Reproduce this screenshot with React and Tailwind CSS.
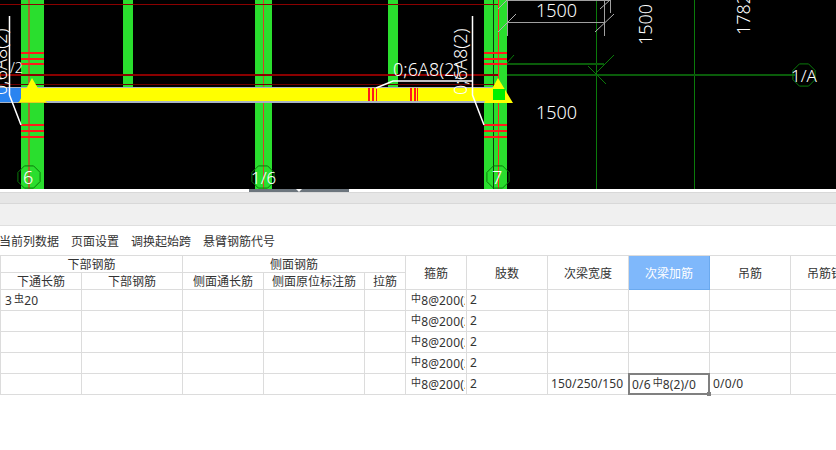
const FONT = '"Noto Sans", "Noto Sans CJK SC", sans-serif';
const CJK = '"Noto Sans CJK SC", sans-serif';

function Octagon({ cx, cy, r }) {
  const pts = [];
  for (let i = 0; i < 8; i++) {
    const a = ((i + 0.5) * Math.PI) / 4;
    pts.push(`${cx + r * Math.cos(a)},${cy + r * Math.sin(a)}`);
  }
  return <polygon points={pts.join(" ")} fill="none" stroke="#0a7a0a" strokeWidth="1" />;
}

function Stirrups({ x, w }) {
  return (
    <g fill="#ff1a1a">
      {[52, 58, 63, 124, 130, 136].map((y) => (
        <rect key={y} x={x} y={y} width={w} height="2" />
      ))}
    </g>
  );
}

function CadCanvas() {
  const label = { fontFamily: FONT, fill: "#fff", fontSize: 18, fontWeight: 300 };
  return (
    <svg width="836" height="189" viewBox="0 0 836 189" className="block">
      <rect width="836" height="189" fill="#000" />
      {/* axis lines */}
      <rect x="596" y="0" width="1" height="189" fill="#0a7a0a" />
      <rect x="694" y="0" width="1" height="189" fill="#0a7a0a" />
      <rect x="498" y="74" width="297" height="2" fill="#0a5c0a" />
      <rect x="498" y="63" width="106" height="2" fill="#0a5c0a" />
      <path d="M498 73L514 55M588 66L606 84M596 73L614 55" stroke="#0a7a0a" fill="none" />

      {/* columns */}
      <g fill="#2ade2e">
        <rect x="21" y="0" width="23" height="189" />
        <rect x="123" y="0" width="10" height="88" />
        <rect x="255" y="0" width="17" height="189" />
        <rect x="388" y="0" width="10" height="88" />
        <rect x="484" y="0" width="23" height="189" />
      </g>
      <rect x="28" y="0" width="2" height="189" fill="#a8662c" />
      <rect x="263" y="0" width="1" height="189" fill="#d8402a" />
      <rect x="493" y="0" width="1" height="189" fill="#0b3b10" />
      <rect x="498" y="0" width="1" height="189" fill="#ff2a1a" />
      <Stirrups x={21} w={23} />
      <Stirrups x={484} w={23} />

      {/* dark red axis */}
      <rect x="0" y="4" width="498" height="1" fill="#8b0000" />
      <rect x="0" y="74" width="498" height="2" fill="#8b0000" />
      <rect x="0" y="84" width="498" height="1" fill="#6b0000" />

      {/* beam */}
      <rect x="0" y="87" width="500" height="16" fill="#a9b4c4" />
      <rect x="0" y="88" width="21" height="14" fill="#2a84f0" />
      <rect x="21" y="88" width="479" height="13" fill="#ffff00" />
      <polygon points="32,78 46,102 19,102" fill="#ffff00" />
      <rect x="18" y="102" width="29" height="1" fill="#e0d020" />
      <polygon points="498,78 513,103 484,103" fill="#ffff00" />
      <rect x="493" y="89" width="12" height="11" fill="#00f000" />
      <g fill="#ff1a1a">
        <rect x="368" y="88" width="2" height="13" />
        <rect x="372" y="88" width="2" height="13" />
        <rect x="376" y="88" width="1" height="13" />
        <rect x="410" y="88" width="2" height="13" />
        <rect x="414" y="88" width="2" height="13" />
        <rect x="417" y="88" width="1" height="13" />
      </g>

      {/* dimension box */}
      <path d="M507 0.5H610M507 22.5H604M507.5 0V36M604.5 0V36M610.5 0V13" stroke="#a0a0a0" fill="none" />
      <path d="M498 32L516 14M498 9L507 0M595 32L614 14M600 9L610 0" stroke="#b0b0b0" fill="none" />

      {/* leaders */}
      <path d="M9.5 16V95L21 125M472.5 16V95L484 125M376 88L393 81H472" stroke="#fff" strokeWidth="1.5" fill="none" />

      {/* labels */}
      <text {...label} x="536" y="17">1500</text>
      <text {...label} x="536" y="119">1500</text>
      <text {...label} x="393" y="76">0;6A8(2)</text>
      <text {...label} transform="translate(467 95) rotate(-90)">0;6A8(2)</text>
      <text {...label} transform="translate(7 95) rotate(-90)">0;6A8(2)</text>
      <text {...label} fontSize="14" x="10" y="73">/2</text>
      <text {...label} transform="translate(652 45) rotate(-90)">1500</text>
      <text {...label} transform="translate(750 35) rotate(-90)">1782</text>

      {/* axis bubbles */}
      <Octagon cx={29} cy={177} r={12} />
      <Octagon cx={263} cy={177} r={12} />
      <Octagon cx={498} cy={177} r={12} />
      <Octagon cx={804} cy={75} r={12} />
      <text {...label} x="23" y="184">6</text>
      <text {...label} fontSize="17" x="251" y="184">1/6</text>
      <text {...label} x="492" y="184">7</text>
      <text {...label} fontSize="17" x="791" y="82">1/A</text>
    </svg>
  );
}

function Rebar({ children }) {
  return <span className="text-[10px] align-[3px] ml-[2px]" style={{ fontFamily: CJK }}>{children}</span>;
}

const HCELL = "flex items-center justify-center border-r border-b border-[#dcdcdc] text-[#333] overflow-hidden whitespace-nowrap";
const CELL = "flex items-center border-r border-b border-[#dcdcdc] overflow-hidden whitespace-nowrap pl-[3px] text-[#333] tracking-[0.15px]";

const rows = [
  { a: <>3<Rebar>虫</Rebar>20</> },
  {},
  {},
  {},
  { width: "150/250/150", sel: <>0/6<Rebar>中</Rebar>8(2)/0</>, hang: "0/0/0" },
];

function RebarTable() {
  return (
    <div
      className="grid w-[871px] border-t border-l border-[#dcdcdc] text-[12px] grid-cols-[81px_101px_81px_101px_41px_61px_81px_81px_81px_81px_81px] grid-rows-[17px_17px_21px_21px_21px_21px_21px]"
      style={{ fontFamily: CJK }}
    >
      <div className={`${HCELL} col-span-2`}>下部钢筋</div>
      <div className={`${HCELL} col-span-3`}>侧面钢筋</div>
      <div className={`${HCELL} row-span-2`}>箍筋</div>
      <div className={`${HCELL} row-span-2`}>肢数</div>
      <div className={`${HCELL} row-span-2`}>次梁宽度</div>
      <div className={`${HCELL} row-span-2 !bg-[#7fb8fb] !text-white !border-[#6aa9ee]`}>次梁加筋</div>
      <div className={`${HCELL} row-span-2`}>吊筋</div>
      <div className={`${HCELL} row-span-2`}>吊筋锚固</div>
      <div className={HCELL}>下通长筋</div>
      <div className={HCELL}>下部钢筋</div>
      <div className={HCELL}>侧面通长筋</div>
      <div className={HCELL}>侧面原位标注筋</div>
      <div className={HCELL}>拉筋</div>
      {rows.map((r, i) => (
        <div key={i} className="contents" style={{ fontFamily: FONT }}>
          <div className={CELL}><span className="ml-px">{r.a}</span></div>
          <div className={CELL} />
          <div className={CELL} />
          <div className={CELL} />
          <div className={CELL} />
          <div className={CELL}>
            <span className="overflow-hidden mr-px"><Rebar>中</Rebar>8@200(2)</span>
          </div>
          <div className={CELL}>2</div>
          <div className={CELL}>{r.width}</div>
          {r.sel ? (
            <div className="relative -mt-px -ml-px flex items-center border-2 border-[#808080] pl-[2px] text-[#333] whitespace-nowrap tracking-[0.15px]">
              <span>{r.sel}</span>
              <span className="absolute -right-[3px] -bottom-[3px] w-1 h-1 bg-[#808080]" />
            </div>
          ) : (
            <div className={CELL} />
          )}
          <div className={CELL}>{r.hang}</div>
          <div className={CELL} />
        </div>
      ))}
    </div>
  );
}

export default function App() {
  return (
    <div className="w-[836px] h-[450px] overflow-hidden bg-white" style={{ fontFamily: CJK }}>
      <CadCanvas />
      <div className="relative h-[3px] bg-white">
        <div className="absolute left-[249px] top-0 w-[100px] h-[3px] bg-[#6c757d] flex justify-center items-start">
          <span className="w-0 h-0 border-x-[3px] border-x-transparent border-t-[3px] border-t-white" />
        </div>
      </div>
      <div className="h-[12px] bg-[#e6e6e6] border-t border-b border-[#d8d8d8]" />
      <div className="h-[22px] bg-[#f0f0f0] border-b border-[#dfdfdf]" />
      <div className="h-[29px] flex items-center gap-3 -ml-px text-[12px] text-[#333]">
        <span>当前列数据</span>
        <span>页面设置</span>
        <span>调换起始跨</span>
        <span>悬臂钢筋代号</span>
      </div>
      <RebarTable />
    </div>
  );
}
